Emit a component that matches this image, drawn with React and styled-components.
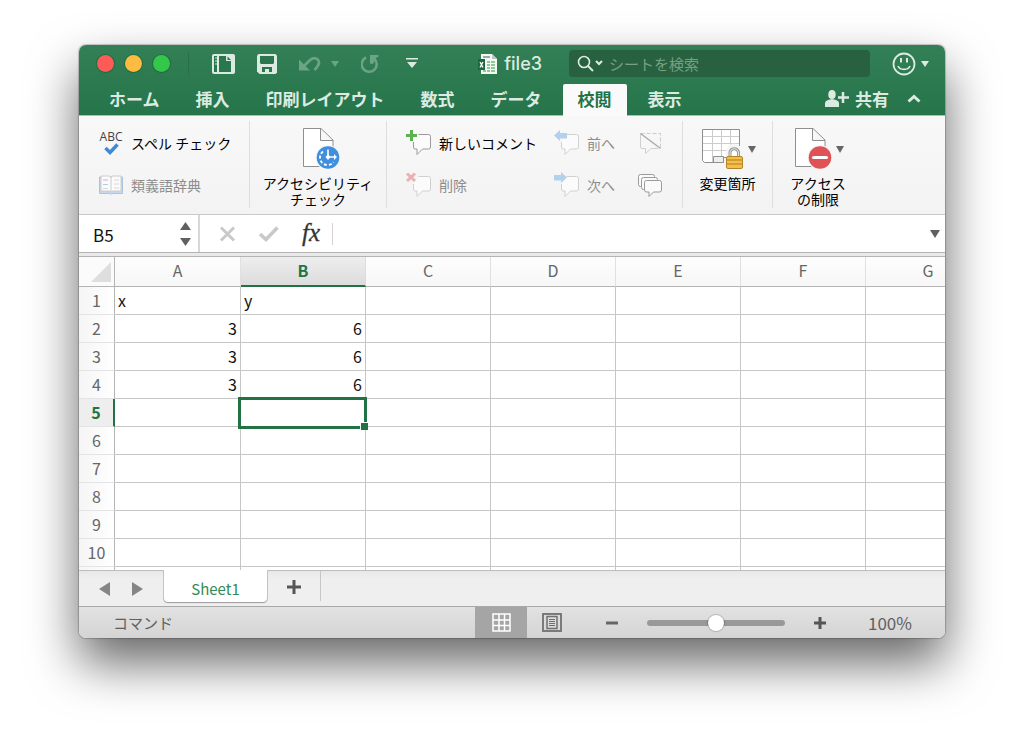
import React, { useState } from "react";
import styled, { createGlobalStyle, css } from "styled-components";

const jp = `"Noto Sans CJK JP", sans-serif`;
const green = "#217346";

const Global = createGlobalStyle`
  *, *::before, *::after { box-sizing: border-box; }
  body { margin: 0; background: #fff; font-family: ${jp}; font-size: 14px; color: #111; }
  button, input { font: inherit; color: inherit; margin: 0; padding: 0; border: 0; background: none; outline: none; }
  svg { display: block; flex: none; }
`;

const Desktop = styled.div`
  padding: 45px 79px 112px;
`;

const Window = styled.main`
  border-radius: 7px;
  overflow: hidden;
  background: #f5f5f5;
  box-shadow: 0 0 1px 1px rgba(0, 0, 0, 0.2), 0 25px 50px rgba(0, 0, 0, 0.6);
`;

const Header = styled.header`
  background: linear-gradient(#348056, #25744a);
  border-bottom: 1px solid #a4c4b2;
  color: #dcebe2;
`;

const TitleBar = styled.div`
  display: flex;
  align-items: center;
  height: 37px;
  padding: 0 16px 0 18px;
`;

const Lights = styled.div`
  display: flex;
  gap: 11px;
  padding-right: 18px;
  border-right: 1px solid #2a6e48;
  height: 22px;
  align-items: center;
`;

const Light = styled.button`
  width: 17px;
  height: 17px;
  border-radius: 50%;
  background: ${(p) => p.$color};
  box-shadow: 0 0 0 1px rgba(20, 70, 35, 0.35);
`;

const Tools = styled.div`
  display: flex;
  align-items: center;
  gap: 22px;
  padding-left: 23px;
`;

const ToolButton = styled.button`
  display: flex;
  align-items: center;
  gap: 9px;
  opacity: ${(p) => (p.disabled ? 0.35 : 1)};
`;

const FileName = styled.h1`
  display: flex;
  align-items: center;
  gap: 7px;
  flex: 1 0 auto;
  justify-content: flex-end;
  padding-right: 27px;
  margin: 0;
  font: 500 18px/26px Inter, ${jp};
`;

const Search = styled.label`
  display: flex;
  align-items: center;
  gap: 6px;
  flex: 0 1 301px;
  height: 27px;
  padding: 0 7px;
  border-radius: 4px;
  background: #28613f;
  input {
    flex: 1;
    min-width: 0;
    font-size: 15px;
    line-height: 20px;
  }
  input::placeholder { color: #76a187; opacity: 1; }
`;

const Smile = styled(ToolButton)`
  gap: 5px;
  margin-left: 22px;
`;

const TabRow = styled.nav`
  display: flex;
  align-items: flex-end;
  height: 33px;
  padding: 0 24px 0 15px;
`;

const TabList = styled.div`
  display: flex;
  gap: 6px;
  flex: 1;
`;

const tabText = css`
  font-size: 17px;
  line-height: 27px;
  font-weight: 700;
`;

const Tab = styled.button`
  height: 31px;
  padding: 0 15px 3px;
  border-radius: 2px 2px 0 0;
  ${tabText}
  white-space: nowrap;
  ${(p) => p.$active && css`
    background: #fafafa;
    color: ${green};
    margin-bottom: -1px;
    height: 32px;
    padding-bottom: 4px;
  `}
`;

const Share = styled.button`
  display: flex;
  align-items: center;
  gap: 6px;
  height: 31px;
  margin-right: 18px;
  padding-bottom: 3px;
  ${tabText}
`;

const Collapse = styled.button`
  height: 31px;
  display: flex;
  align-items: center;
  padding-bottom: 3px;
`;

const Ribbon = styled.section`
  display: flex;
  height: 99px;
  padding: 5px 0 6px;
  background: linear-gradient(#f8f8f8, #f3f3f3);
  border-bottom: 1px solid #c9c9c9;
`;

const Group = styled.div`
  display: flex;
  justify-content: ${(p) => (p.$start ? "flex-start" : "center")};
  width: ${(p) => p.$width}px;
  padding-left: ${(p) => p.$start || 0}px;
  border-right: ${(p) => (p.$last ? "0" : "1px solid #dedede")};
`;

const Column = styled.div`
  display: grid;
  grid-template-rows: 42px 42px;
  padding-top: 1px;
  width: ${(p) => p.$width}px;
`;

const Command = styled.button`
  display: flex;
  align-items: center;
  gap: ${(p) => p.$gap || 7}px;
  font-size: 14px;
  line-height: 20px;
  white-space: nowrap;
  color: #000;
  &:disabled { color: #8c8c8c; }
`;

const BigCommand = styled.button`
  display: flex;
  flex-direction: column;
  align-items: center;
  justify-content: flex-start;
  padding-top: 7px;
  font-size: 14px;
  line-height: 16px;
  color: #000;
  text-align: center;
  white-space: nowrap;
`;

const BigIcon = styled.span`
  display: flex;
  align-items: center;
  gap: 4px;
  height: 42px;
  margin-bottom: 5px;
  padding-left: ${(p) => (p.$menu ? 3 : 7)}px;
`;

const FormulaBar = styled.section`
  display: flex;
  align-items: center;
  height: 38px;
  background: #fff;
  border-bottom: 1px solid #b4b4b4;
`;

const NameBox = styled.label`
  display: flex;
  align-items: center;
  justify-content: space-between;
  width: 121px;
  height: 37px;
  padding: 0 7px 0 14px;
  border-right: 2px solid #d8d8d8;
  input { width: 60px; font-size: 17px; line-height: 24px; padding-top: 2px; }
`;

const Stepper = styled.button`
  display: flex;
`;

const FormulaTools = styled.div`
  display: flex;
  align-items: center;
  gap: 23px;
  padding: 0 12px 0 19px;
`;

const PlainButton = styled.button`
  display: flex;
  align-items: center;
  justify-content: center;
`;

const Fx = styled.button`
  font: italic 25px/25px "Liberation Serif", serif;
  -webkit-text-stroke: 0.3px #333;
  color: #333;
  padding-bottom: 2px;
`;

const FormulaInput = styled.input`
  flex: 1;
  min-width: 0;
  height: 22px;
  border-left: 1px solid #d4d4d4;
`;

const Expand = styled(PlainButton)`
  padding: 0 5px;
`;

const SheetArea = styled.div`
  height: 317px;
  overflow: hidden;
  background: #fff;
  border-top: 3px solid #e9e9e9;
`;

const Table = styled.table`
  table-layout: fixed;
  width: 912px;
  border-spacing: 0;
  font-size: 16px;
  line-height: 20px;
  border-top: 1px solid #b4b4b4;
`;

const Corner = styled.td`
  height: 30px;
  padding: 0 3px 0 12px;
  background: #fbfbfb;
  border-right: 1px solid #b4b4b4;
  border-bottom: 1px solid #b4b4b4;
`;

const ColHead = styled.th`
  height: 30px;
  padding: 0 0 3px;
  font-weight: ${(p) => (p.$active ? 700 : 400)};
  color: ${(p) => (p.$active ? green : "#666")};
  background: ${(p) => (p.$active ? "linear-gradient(#eeeeee, #dcdcdc)" : "linear-gradient(#fdfdfd, #f7f7f7)")};
  border-right: 1px solid ${(p) => (p.$active ? "#dcdcdc" : "#e0e0e0")};
  border-bottom: ${(p) => (p.$active ? `2px solid ${green}` : "1px solid #b4b4b4")};
`;

const RowHead = styled.th`
  height: 28px;
  padding: 0 0 2px;
  font-weight: ${(p) => (p.$active ? 700 : 400)};
  color: ${(p) => (p.$active ? green : "#666")};
  background: ${(p) => (p.$active ? "#eeeeee" : "linear-gradient(90deg, #f5f5f5, #fff)")};
  border-right: ${(p) => (p.$active ? `2px solid ${green}` : "1px solid #b4b4b4")};
  border-bottom: 1px solid #e4e4e4;
`;

const Cell = styled.td`
  position: relative;
  height: 28px;
  padding: 0 3px 2px;
  text-align: ${(p) => (p.$number ? "right" : "left")};
  border-right: 1px solid #c6c6c6;
  border-bottom: 1px solid #c6c6c6;
`;

const Selection = styled.div`
  position: absolute;
  inset: -2px -2px -3px -3px;
  border: 3px solid ${green};
  z-index: 1;
  &::after {
    content: "";
    position: absolute;
    right: -4px;
    bottom: -4px;
    width: 8px;
    height: 8px;
    background: ${green};
    border: 1px solid #fff;
    border-width: 1px 0 0 1px;
  }
`;

const SheetBar = styled.nav`
  display: flex;
  align-items: flex-start;
  height: 36px;
  padding-left: 20px;
  background: linear-gradient(#e8e8e8, #efefef 8px);
  border-top: 1px solid #bdbdbd;
`;

const Arrows = styled.div`
  display: flex;
  align-items: center;
  gap: 22px;
  height: 35px;
  width: 65px;
`;

const SheetTab = styled.button`
  width: 103px;
  height: 32px;
  margin-top: -1px;
  padding-top: 5px;
  border-radius: 0 0 4px 4px;
  background: #fff;
  color: #2f8a58;
  font-size: 15px;
  box-shadow: 0 1px 1px #999, 1px 0 0 #c8c8c8, -1px 0 0 #c8c8c8;
`;

const AddSheet = styled(PlainButton)`
  width: 54px;
  height: 30px;
  padding-top: 2px;
  border-right: 1px solid #c6c6c6;
`;

const StatusBar = styled.footer`
  display: flex;
  align-items: center;
  height: 32px;
  padding-right: 34px;
  background: linear-gradient(#e2e2e2, #d4d4d4);
  border-top: 1px solid #a8a8a8;
  color: #606060;
  font-size: 15px;
`;

const StatusText = styled.span`
  flex: 1;
  padding-left: 34px;
`;

const ViewButton = styled(PlainButton)`
  width: ${(p) => (p.$active ? 52 : 50)}px;
  height: 31px;
  background: ${(p) => (p.$active ? "#a5a5a5" : "none")};
`;

const Zoom = styled.div`
  display: flex;
  align-items: center;
  gap: 29px;
  margin: 0 42px 0 29px;
`;

const Slider = styled.input`
  appearance: none;
  width: 138px;
  height: 16px;
  &::-webkit-slider-runnable-track {
    height: 6px;
    border-radius: 3px;
    background: #999;
  }
  &::-webkit-slider-thumb {
    appearance: none;
    width: 16px;
    height: 16px;
    margin-top: -5px;
    border-radius: 50%;
    background: #fff;
    box-shadow: 0 0 1px 1px rgba(0, 0, 0, 0.2);
  }
`;

const Percent = styled.output`
  width: 43px;
  text-align: right;
  font: 17px/24px ${jp};
`;

const Tri = ({ w = 8, h = 6, color = "currentColor", dir = "down" }) => {
  const d = {
    down: `M0 0H${w}L${w / 2} ${h}Z`,
    left: `M${w} 0V${h}L0 ${h / 2}Z`,
    right: `M0 0V${h}L${w} ${h / 2}Z`,
  }[dir];
  return <svg width={w} height={h}><path d={d} fill={color} /></svg>;
};

const LayoutIcon = () => (
  <svg width="23" height="20" viewBox="0 0 23 20">
    <rect x="0" y="0" width="23" height="20" rx="2" fill="#dcebe2" />
    <path d="M7 2H14V7H19V18H7Z" fill="#2b774d" />
    <path d="M2 2H5V18H2Z" fill="#2b774d" />
    <path d="M15.5 2.5L19 6H15.5Z" fill="#2b774d" />
    <path d="M3 4H5M3 7H5M3 10H5" stroke="#dcebe2" />
  </svg>
);

const SaveIcon = () => (
  <svg width="20" height="20" viewBox="0 0 20 20">
    <path d="M1.5 0H18.5L20 1.5V18.5L18.5 20H2.5L0 17.5V1.5Z" fill="#dcebe2" />
    <path d="M3 2H17V9L16 10H4L3 9ZM5 13H15V18H12V15H8V18H5Z" fill="#2b774d" />
  </svg>
);

const UndoIcon = () => (
  <svg width="23" height="16" viewBox="0 0 23 16">
    <path d="M0 3.500V14.500H11Z" fill="#dcebe2" />
    <path d="M5 10L10.500 4.500C14 1 18 1.800 19.500 4.500C21 7.500 19.500 9.800 15.500 14" fill="none" stroke="#dcebe2" strokeWidth="2.600" />
  </svg>
);

const RedoIcon = () => (
  <svg width="19" height="20" viewBox="0 0 19 20">
    <path d="M5 3.500A7.500 7.500 0 1 0 13 4.500" fill="none" stroke="#dcebe2" strokeWidth="2.600" />
    <path d="M9 1H17.500V2.500L15 4L12 10L9 9.500Z" fill="#dcebe2" />
  </svg>
);

const CustomizeIcon = () => (
  <svg width="20" height="11" viewBox="0 0 20 11">
    <path d="M4 0H16V1.500H4ZM5 4H15L10 10Z" fill="#dcebe2" />
  </svg>
);

const WorkbookIcon = () => (
  <svg width="19" height="20" viewBox="0 0 19 20">
    <path d="M3 0H14L19 5V20H3Z" fill="#f4f8f4" />
    <path d="M14 0V5H19Z" fill="#b9c8bd" />
    <path d="M5 2H12V4H5Z" fill="#9aa" />
    <path d="M9 7H12V9H9ZM13 7H17V9H13ZM9 10H12V12H9ZM13 10H17V12H13ZM9 13H12V15H9ZM13 13H17V15H13ZM5 16H8V18H5ZM9 16H12V18H9ZM13 16H17V18H13Z" fill="#8fc795" />
    <path d="M0 5H7V16H0Z" fill="#1c6740" />
    <path d="M2 8L5 13.500M5 8L2 13.500" stroke="#fff" strokeWidth="1.300" />
  </svg>
);

const SearchIcon = () => (
  <svg width="27" height="18" viewBox="0 0 27 18">
    <circle cx="8" cy="7" r="5.500" fill="none" stroke="#dcebe2" strokeWidth="1.600" />
    <path d="M12 11L17 16" stroke="#dcebe2" strokeWidth="2" />
    <path d="M20 6L23 9L26 6" fill="none" stroke="#dcebe2" strokeWidth="2" />
  </svg>
);

const SmileIcon = () => (
  <svg width="24" height="24" viewBox="0 0 24 24" fill="none" stroke="#dcebe2">
    <circle cx="12" cy="12" r="10.500" strokeWidth="1.800" />
    <path d="M9 6V10.500M15 6V10.500" strokeWidth="2" />
    <path d="M6 14C8 18.500 16 18.500 18 14" strokeWidth="1.600" />
  </svg>
);

const ShareIcon = () => (
  <svg width="24" height="17" viewBox="0 0 24 17">
    <ellipse cx="7" cy="4.500" rx="3.700" ry="4.500" fill="#dcebe2" />
    <path d="M0 17V13Q0 11 3 10L7 9L11 10Q14 11 14 13V17Z" fill="#dcebe2" />
    <path d="M18 2V13M13 7.500H24" stroke="#dcebe2" strokeWidth="2.500" />
  </svg>
);

const ChevronUp = () => (
  <svg width="14" height="9" viewBox="0 0 14 9">
    <path d="M1.500 7.500L7 2.500L12.500 7.500" fill="none" stroke="#dcebe2" strokeWidth="3" />
  </svg>
);

const AbcMark = styled.span`
  display: flex;
  flex-direction: column;
  align-items: center;
  width: 24px;
  font: 12px/12px "Open Sans", sans-serif;
  color: #444;
`;

const SpellIcon = () => (
  <AbcMark>
    ABC
    <svg width="15" height="12" viewBox="0 0 15 12">
      <path d="M1.500 5L6 9.500L13.500 1.500" fill="none" stroke="#3f8ad8" strokeWidth="3.500" />
    </svg>
  </AbcMark>
);

const BookIcon = () => (
  <svg width="24" height="20" viewBox="0 0 24 20">
    <path d="M0.500 2H23.500V18.500H13L12 19.500L11 18.500H0.500Z" fill="#c5d8ec" stroke="#a9c4e0" />
    <path d="M2 1H10Q12 1 12 3Q12 1 14 1H22V16H14Q12 16 12 18Q12 16 10 16H2Z" fill="#fbfbfb" stroke="#ccc" />
    <path d="M12 3V17" stroke="#ccc" />
    <path d="M4 5H9" stroke="#eba9a9" />
    <path d="M4 9.500H9" stroke="#a9cdee" />
    <path d="M4 13.500H9M15 5H20M15 9H20M15 13H20" stroke="#d8d8d8" />
  </svg>
);

const Doc = () => (
  <path d="M0.500 0.500H18L30 12V38.500H0.500Z M17.500 0.500V12.500H30" fill="#fff" stroke="#8f8f8f" />
);

const AccessibilityIcon = () => (
  <svg width="37" height="42" viewBox="0 0 37 42">
    <Doc />
    <circle cx="25" cy="29.500" r="12.500" fill="#f5f5f5" />
    <circle cx="25" cy="29.500" r="11.300" fill="#3f8fe0" />
    <path d="M20 23.500A7.500 7.500 0 1 0 30.500 34" fill="none" stroke="#fff" strokeWidth="1.800" strokeDasharray="3 2" />
    <path d="M25 21.500V30M25 29H33" stroke="#fff" strokeWidth="1.600" />
    <path d="M22.500 29L25 26L27.500 29L25 32ZM31 26L34 29L31 32Z" fill="#fff" />
  </svg>
);

const RestrictIcon = () => (
  <svg width="37" height="42" viewBox="0 0 37 42">
    <Doc />
    <circle cx="25" cy="29.500" r="12.500" fill="#f5f5f5" />
    <circle cx="25" cy="29.500" r="11.300" fill="#df5256" />
    <path d="M18.500 29.500H31.500" stroke="#fff" strokeWidth="3" strokeLinecap="round" />
  </svg>
);

const ChangesIcon = () => (
  <svg width="42" height="42" viewBox="0 0 42 42">
    <path d="M0.500 1.500H37.500V29.500H21.500V34.500H2.500L0.500 32.500Z" fill="#fff" stroke="#8f8f8f" />
    <path d="M1 8.500H37M1 15.500H37M1 22.500H37M10.500 2V34M19.500 2V28M28.500 2V28" stroke="#ccc" />
    <path d="M11.500 28.500H21.500V34.500H11.500Z" fill="#eee" stroke="#8f8f8f" />
    <path d="M26 32V24A6 6.500 0 0 1 38 24V32Z" fill="#f5f5f5" stroke="#f5f5f5" strokeWidth="4" />
    <path d="M28 29V24A4.500 5 0 0 1 36.500 24V29" fill="#fff" stroke="#9a9a9a" strokeWidth="3" />
    <path d="M28 29V24A4.500 5 0 0 1 36.500 24V29" fill="none" stroke="#e4e4e4" />
    <rect x="24.500" y="28.500" width="16" height="12" rx="1.500" fill="#f0c04e" stroke="#b98223" />
    <path d="M25 32H40M25 36H40" stroke="#c99127" strokeWidth="1.500" />
  </svg>
);

const Bubble = ({ color }) => (
  <path d="M12.500 4.500H22.500Q24.500 4.500 24.500 6.500V17Q24.500 19 22.500 19H16.500L11 24.500V19H9Q7.500 19 7.500 17V12" fill="#fbfbfb" stroke={color} />
);

const CommentIcon = ({ kind }) => (
  <svg width="26" height="26" viewBox="0 0 26 26">
    <Bubble color={kind === "new" ? "#9a9a9a" : "#d0d0d0"} />
    {kind === "new" && <path d="M5.500 0V11M0 5.500H11" stroke="#5cb152" strokeWidth="3" />}
    {kind === "delete" && <path d="M1 1.500L9 9M9 1.500L1 9" stroke="#eab0b3" strokeWidth="3" />}
    {kind === "prev" && <path d="M0 5.500L6 0V3H13V8.500H6V11Z" fill="#b3d0ee" />}
    {kind === "next" && <path d="M13 5.500L7 0V3H0V8.500H7V11Z" fill="#b3d0ee" />}
  </svg>
);

const HideCommentIcon = () => (
  <svg width="24" height="24" viewBox="0 0 24 24" fill="none">
    <path d="M2.500 3V16Q2.500 17.500 4 17.500H7.500V22.500L13 17.500H20" stroke="#d0d0d0" />
    <path d="M2.500 2.500H22.500V17" stroke="#ccc" strokeDasharray="4 2" />
    <path d="M2.500 2.500L22.500 17.500" stroke="#ababab" strokeWidth="1.400" />
  </svg>
);

const AllCommentsIcon = () => (
  <svg width="24" height="24" viewBox="0 0 24 24" fill="#fafafa" stroke="#9a9a9a">
    <rect x="0.500" y="1.500" width="16" height="12" rx="2" />
    <rect x="3.500" y="4.500" width="16" height="12" rx="2" />
    <path d="M8.500 7.500H21.500Q23.500 7.500 23.500 9.500V17Q23.500 19 21.500 19H15.500L11 23.500V19H8.500Q6.500 19 6.500 17V9.500Q6.500 7.500 8.500 7.500Z" />
  </svg>
);

const StepperIcon = () => (
  <svg width="11" height="24" viewBox="0 0 11 24">
    <path d="M5.500 0L11 8H0ZM0 16H11L5.500 24Z" fill="#606060" />
  </svg>
);

const CancelIcon = () => (
  <svg width="17" height="16" viewBox="0 0 17 16">
    <path d="M2 1.500L15 14.500M15 1.500L2 14.500" stroke="#c9c9c9" strokeWidth="3" />
  </svg>
);

const AcceptIcon = () => (
  <svg width="20" height="16" viewBox="0 0 20 16">
    <path d="M1 8L7 13.500L18.500 1.500" fill="none" stroke="#c9c9c9" strokeWidth="3.500" />
  </svg>
);

const PlusIcon = ({ size, bar }) => (
  <svg width={size} height={size} viewBox={`0 0 ${size} ${size}`}>
    <path d={`M${size / 2} 0V${size}M0 ${size / 2}H${size}`} stroke="#555" strokeWidth={bar} />
  </svg>
);

const MinusIcon = () => (
  <svg width="12" height="12" viewBox="0 0 12 12"><path d="M0 6H12" stroke="#666" strokeWidth="3" /></svg>
);

const GridIcon = () => (
  <svg width="19" height="19" viewBox="0 0 19 19">
    <path d="M1 1H18V18H1ZM7 1V18M12.500 1V18M1 7H18M1 12.500H18" fill="none" stroke="#fff" strokeWidth="1.500" />
  </svg>
);

const PageIcon = () => (
  <svg width="20" height="19" viewBox="0 0 20 19" fill="none" stroke="#707070">
    <rect x="1" y="1" width="18" height="17" strokeWidth="1.800" />
    <rect x="5" y="3.500" width="10" height="12" strokeWidth="1.500" />
    <path d="M7 6.500H13M7 8.500H13M7 10.500H13M7 12.500H13" />
  </svg>
);

const CornerIcon = () => (
  <svg width="20" height="20" viewBox="0 0 20 20"><path d="M20 0V20H0Z" fill="#dedede" /></svg>
);

const tabs = ["ホーム", "挿入", "印刷レイアウト", "数式", "データ", "校閲", "表示"];
const columns = ["A", "B", "C", "D", "E", "F", "G"];
const rows = [1, 2, 3, 4, 5, 6, 7, 8, 9, 10];
const data = { A1: "x", B1: "y", A2: 3, B2: 6, A3: 3, B3: 6, A4: 3, B4: 6 };
const selected = { col: "B", row: 5 };

function Grid() {
  return (
    <Table>
      <colgroup>
        <col style={{ width: 36 }} />
        <col style={{ width: 126 }} />
        {columns.slice(1).map((c) => <col key={c} style={{ width: 125 }} />)}
      </colgroup>
      <thead>
        <tr>
          <Corner><CornerIcon /></Corner>
          {columns.map((c) => <ColHead key={c} scope="col" $active={c === selected.col}>{c}</ColHead>)}
        </tr>
      </thead>
      <tbody>
        {rows.map((r) => (
          <tr key={r}>
            <RowHead scope="row" $active={r === selected.row}>{r}</RowHead>
            {columns.map((c) => {
              const value = data[c + r];
              return (
                <Cell key={c} $number={typeof value === "number"}>
                  {value}
                  {c === selected.col && r === selected.row && <Selection />}
                </Cell>
              );
            })}
          </tr>
        ))}
        <tr>
          <RowHead aria-hidden="true" />
          {columns.map((c) => <Cell key={c} />)}
        </tr>
      </tbody>
    </Table>
  );
}

export default function App() {
  const [active, setActive] = useState("校閲");
  return (
    <Desktop>
      <Global />
      <Window>
        <Header>
          <TitleBar>
            <Lights>
              <Light aria-label="閉じる" $color="#fc5b57" />
              <Light aria-label="しまう" $color="#fdbc40" />
              <Light aria-label="拡大" $color="#34c84a" />
            </Lights>
            <Tools>
              <ToolButton aria-label="レイアウト"><LayoutIcon /></ToolButton>
              <ToolButton aria-label="保存"><SaveIcon /></ToolButton>
              <ToolButton aria-label="元に戻す" disabled><UndoIcon /><Tri /></ToolButton>
              <ToolButton aria-label="やり直し" disabled><RedoIcon /></ToolButton>
              <ToolButton aria-label="カスタマイズ"><CustomizeIcon /></ToolButton>
            </Tools>
            <FileName><WorkbookIcon />file3</FileName>
            <Search>
              <SearchIcon />
              <input type="search" aria-label="シートを検索" placeholder="シートを検索" />
            </Search>
            <Smile aria-label="フィードバック"><SmileIcon /><Tri /></Smile>
          </TitleBar>
          <TabRow>
            <TabList>
              {tabs.map((t) => (
                <Tab key={t} $active={t === active} onClick={() => setActive(t)}>{t}</Tab>
              ))}
            </TabList>
            <Share><ShareIcon />共有</Share>
            <Collapse aria-label="リボンを閉じる"><ChevronUp /></Collapse>
          </TabRow>
        </Header>

        <Ribbon>
          <Group $width={171} $start={20}>
            <Column>
              <Command $gap={8}><SpellIcon />スペル チェック</Command>
              <Command $gap={8} disabled><BookIcon />類義語辞典</Command>
            </Column>
          </Group>
          <Group $width={137}>
            <BigCommand>
              <BigIcon><AccessibilityIcon /></BigIcon>
              アクセシビリティ<br />チェック
            </BigCommand>
          </Group>
          <Group $width={296} $start={19}>
            <Column $width={148}>
              <Command><CommentIcon kind="new" />新しいコメント</Command>
              <Command disabled><CommentIcon kind="delete" />削除</Command>
            </Column>
            <Column $width={84}>
              <Command disabled><CommentIcon kind="prev" />前へ</Command>
              <Command disabled><CommentIcon kind="next" />次へ</Command>
            </Column>
            <Column $width={24}>
              <Command aria-label="コメントの表示/非表示" disabled><HideCommentIcon /></Command>
              <Command aria-label="すべてのコメントを表示"><AllCommentsIcon /></Command>
            </Column>
          </Group>
          <Group $width={90}>
            <BigCommand>
              <BigIcon $menu><ChangesIcon /><Tri w={8} h={7} color="#666" /></BigIcon>
              変更箇所
            </BigCommand>
          </Group>
          <Group $width={90} $last>
            <BigCommand>
              <BigIcon $menu><RestrictIcon /><Tri w={8} h={7} color="#666" /></BigIcon>
              アクセス<br />の制限
            </BigCommand>
          </Group>
        </Ribbon>

        <FormulaBar>
          <NameBox>
            <input aria-label="名前ボックス" defaultValue="B5" />
            <Stepper aria-label="セルを選択"><StepperIcon /></Stepper>
          </NameBox>
          <FormulaTools>
            <PlainButton aria-label="キャンセル"><CancelIcon /></PlainButton>
            <PlainButton aria-label="入力"><AcceptIcon /></PlainButton>
            <Fx>fx</Fx>
          </FormulaTools>
          <FormulaInput aria-label="数式バー" />
          <Expand aria-label="数式バーを展開"><Tri w={10} h={8} color="#606060" /></Expand>
        </FormulaBar>

        <SheetArea><Grid /></SheetArea>

        <SheetBar>
          <Arrows>
            <PlainButton aria-label="前のシート"><Tri w={11} h={14} color="#858585" dir="left" /></PlainButton>
            <PlainButton aria-label="次のシート"><Tri w={11} h={14} color="#858585" dir="right" /></PlainButton>
          </Arrows>
          <SheetTab>Sheet1</SheetTab>
          <AddSheet aria-label="シートを追加"><PlusIcon size={14} bar={3} /></AddSheet>
        </SheetBar>

        <StatusBar>
          <StatusText>コマンド</StatusText>
          <ViewButton aria-label="標準" $active><GridIcon /></ViewButton>
          <ViewButton aria-label="ページ レイアウト"><PageIcon /></ViewButton>
          <Zoom>
            <PlainButton aria-label="縮小"><MinusIcon /></PlainButton>
            <Slider type="range" aria-label="ズーム" min="0" max="200" defaultValue="100" />
            <PlainButton aria-label="拡大"><PlusIcon size={12} bar={3} /></PlainButton>
          </Zoom>
          <Percent>100%</Percent>
        </StatusBar>
      </Window>
    </Desktop>
  );
}
